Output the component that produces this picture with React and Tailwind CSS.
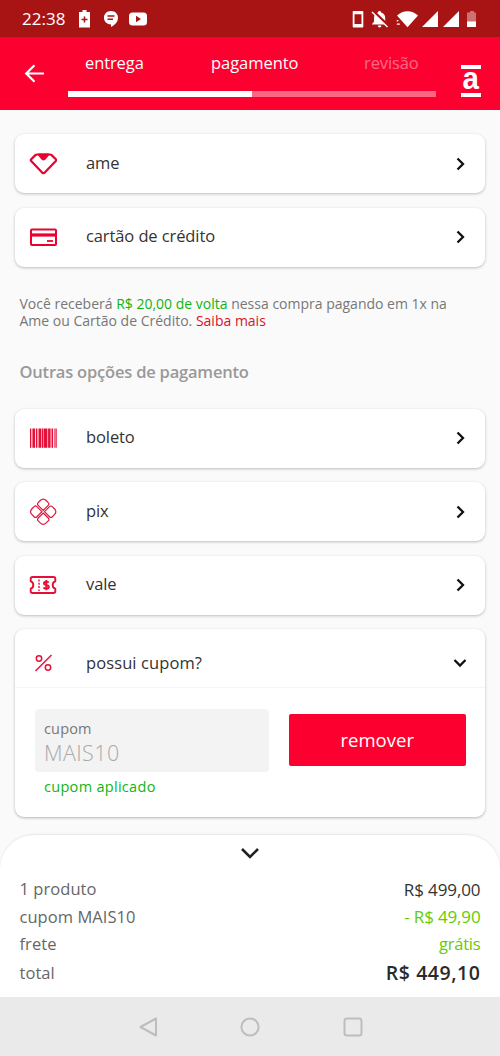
import React from "react";

const App = () => {

  return (

    <div className="w-[500px] h-[1056px] flex flex-col overflow-hidden bg-[#fafafa] font-['Open_Sans','Noto_Sans',sans-serif] text-[#333333]">

      <StatusBar />

      <Header />

      {/* CONTENT */}

      <main className="flex-1 px-[15px] pt-[24px]">

        <div className="flex flex-col gap-[14.5px]">

          <Option
            icon={<AmeIcon />}
            label="ame"
          />

          <Option
            icon={<CardIcon />}
            label="cartão de crédito"
          />

        </div>

        <p className="mt-[28px] pl-[4.5px] text-[14px] leading-[17.5px] text-[#777777] whitespace-nowrap">

          <span className="block">
            Você receberá <span className="text-[#10b510]">R$ 20,00 de volta</span> nessa compra pagando em 1x na
          </span>

          <span className="block">
            Ame ou Cartão de Crédito. <span className="text-[#d4142c]">Saiba mais</span>
          </span>

        </p>

        <h2 className="mt-[30px] pl-[4.5px] text-[16.5px] leading-[24px] font-semibold tracking-[-0.2px] text-[#999999]">
          Outras opções de pagamento
        </h2>

        <div className="mt-[25px] flex flex-col gap-[14.5px]">

          <Option
            icon={<BarcodeIcon />}
            label="boleto"
          />

          <Option
            icon={<PixIcon />}
            label="pix"
          />

          <Option
            icon={<TicketIcon />}
            label="vale"
          />

          <Coupon />

        </div>

      </main>

      <Summary />

      <NavBar />

    </div>
  );
};

const StatusBar = () => (

  <div className="h-[37px] shrink-0 bg-[#a81414] text-white flex items-center justify-between pl-[22px] pr-[22px]">

    <div className="flex items-center">

      <span className="w-[57px] text-[17px] leading-[20px]">
        22:38
      </span>

      {/* battery, message, video */}

      <svg width="70" height="18" viewBox="0 0 70 18" fill="currentColor">
        <path d="M3.5 2V0h4v2H11v15.5H0V2z" />
        <path d="M5.5 6.5v6M2.5 9.5h6" stroke="#a81414" strokeWidth="1.6" />
        <path d="M32 1c4.200 0 7 2.900 7 6.700 0 4.300-3.100 7.300-7 9.300v-2.600c-4.100 0-7-2.800-7-6.700C25 3.900 27.800 1 32 1z" />
        <path d="M28.500 6h7M28.500 9.300h5.500" stroke="#a81414" strokeWidth="1.400" />
        <rect x="50" y="2.500" width="18" height="13" rx="3.500" />
        <path d="M57 5.800v6.400l5-3.200z" fill="#a81414" />
      </svg>

    </div>

    {/* phone, muted bell, wifi, signals, battery level */}

    <svg width="126" height="18" viewBox="0 0 126 18" fill="currentColor">
      <path fillRule="evenodd" d="M1.500 1h9a.8.8 0 0 1 .8.8v14.900a.8.8 0 0 1-.8.8h-9a.8.8 0 0 1-.8-.8V1.800a.8.8 0 0 1 .8-.8zM2.500 4.300v9.800h7V4.300z" />
      <path d="M27.500 1c1 0 1.600.6 1.600 1.500 2.700.7 4.100 2.800 4.100 5.400v3.800l2 2.200v.6H20v-.6l2-2.200V7.900c0-2.600 1.400-4.700 4-5.400 0-.9.600-1.500 1.500-1.500zM25.800 15.500h3.600c0 1.200-.8 1.900-1.800 1.900s-1.800-.7-1.800-1.900z" />
      <path d="M20.500 0.700L36.500 16" stroke="#a81414" strokeWidth="3" />
      <path d="M20 2L35.500 17" stroke="currentColor" strokeWidth="1.400" />
      <path d="M45 5.500C51-.2 60-.2 66 5.500L55.500 17.300z" />
      <path d="M43.500 9.300h4.500v6h-4.500z" fill="#a81414" />
      <path d="M44.800 9.800l2.300 1-2.300 1zM44.800 13.500h3v1.300h-3z" />
      <path d="M86 1v16H70zM107 1v16H91z" />
      <path d="M118 2.500V1h4v1.500h2V12h-9V2.500z" fillOpacity="0.4" />
      <path d="M115 11.500h9v5.500h-9z" />
    </svg>

  </div>
);

const Header = () => (

  <header className="h-[73px] shrink-0 bg-[#fc0030] text-white flex">

    <div className="w-[68px] pt-[27px] pl-[24px]">

      <svg width="21" height="19" viewBox="0 0 21 19" fill="none" stroke="currentColor" strokeWidth="2.200">
        <path d="M20 9.500H2.500M10.500 1.200L2.200 9.500l8.300 8.300" />
      </svg>

    </div>

    <div className="w-[368px]">

      <div className="h-[54px] pt-[14px] grid grid-cols-[143px_153px_72px] text-[16.5px] leading-[24px]">

        <span className="pl-[17px] tracking-[-0.1px]">entrega</span>

        <span className="tracking-[-0.05px]">pagamento</span>

        <span className="tracking-[-0.1px] opacity-40">revisão</span>

      </div>

      <div className="h-[5.500px] bg-white/40">
        <div className="h-full w-1/2 bg-white" />
      </div>

    </div>

    {/* LOGO */}

    <div className="ml-[25px] mt-[28px] w-[20px] h-[32px] border-y-[4px] border-white flex items-center justify-center">
      <span className="font-['Liberation_Sans',sans-serif] font-bold text-[31px] leading-[24px] -mt-[5px] scale-x-95">a</span>
    </div>

  </header>
);

const Option = ({ icon, label }) => (

  <button className="w-full h-[59px] shrink-0 rounded-[9px] bg-white shadow-[0_1px_3px_rgba(0,0,0,0.25)] flex items-center text-left">

    <span className="w-[71px] pl-[14px]">{icon}</span>

    <span className="flex-1 pb-[2px] text-[16.5px] leading-[24px] tracking-[-0.1px]">{label}</span>

    <svg className="mr-[19px]" width="10" height="14" viewBox="0 0 10 14" fill="none" stroke="#111111" strokeWidth="2.300">
      <path d="M1.500 1.500L7 7 1.500 12.500" />
    </svg>

  </button>
);

const Coupon = () => (

  <section className="h-[187.500px] rounded-[9px] bg-white shadow-[0_1px_3px_rgba(0,0,0,0.28)]">

    <div className="h-[59px] pt-[9px] border-b border-[#f4f4f4] flex items-center">

      <span className="w-[71px] pl-[14px]"><PercentIcon /></span>

      <span className="flex-1 text-[16.5px] leading-[24px] tracking-[0.1px]">possui cupom?</span>

      <svg className="mr-[18px]" width="14" height="10" viewBox="0 0 14 10" fill="none" stroke="#111111" strokeWidth="2.300">
        <path d="M1.500 2L7 7.500 12.500 2" />
      </svg>

    </div>

    <div className="pl-[19.500px] pt-[21px] flex">

      <div className="w-[234.500px]">

        <div className="h-[63px] rounded-[4px] bg-[#f3f3f3] pl-[9.500px] pt-[9.500px]">

          <p className="text-[14.500px] leading-[20px] tracking-[0.15px] text-[#777777]">cupom</p>

          <p className="text-[21.500px] leading-[28px] tracking-[0.4px] font-light text-[#aaaaaa]">MAIS10</p>

        </div>

        <p className="mt-[5px] pl-[9.500px] text-[14.500px] leading-[20px] tracking-[0.3px] text-[#10b510]">
          cupom aplicado
        </p>

      </div>

      <button className="ml-[20px] mt-[4.500px] w-[176.500px] h-[52.500px] pt-px rounded-[2px] bg-[#fc0030] text-white text-[18.500px] leading-[24px]">
        remover
      </button>

    </div>

  </section>
);

const Summary = () => (

  <section className="h-[162px] shrink-0 rounded-t-[34px] bg-white shadow-[0_-1px_2px_rgba(0,0,0,0.08)] px-[19.500px] text-[16.5px] text-[#666666]">

    <div className="h-[41px] pt-[12px] flex justify-center">

      <svg width="20" height="12" viewBox="0 0 20 12" fill="none" stroke="#222222" strokeWidth="2.600">
        <path d="M2 2l8 8 8-8" />
      </svg>

    </div>

    <Row label="1 produto" value="R$ 499,00" valueClass="text-[#333333] text-[17px] tracking-[-0.1px]" />

    <Row label="cupom MAIS10" value="- R$ 49,90" valueClass="text-[#66cc00] text-[17px] tracking-[-0.15px]" />

    <Row label="frete" value="grátis" valueClass="text-[#66cc00] tracking-[-0.2px]" />

    <div className="mt-[1.500px]">
      <Row label="total" value="R$ 449,10" valueClass="text-[#2a2a2a] font-semibold text-[19.500px] tracking-[0.550px]" />
    </div>

  </section>
);

const Row = ({ label, value, valueClass }) => (

  <div className="h-[27.300px] flex items-center justify-between">
    <span className="tracking-[0.05px]">{label}</span>
    <span className={valueClass}>{value}</span>
  </div>
);

const NavBar = () => (

  <nav className="h-[59px] shrink-0 bg-[#eaeaea] flex items-center justify-center gap-[82.500px]">

    <svg width="20" height="20" viewBox="0 0 20 20" fill="none" stroke="#bdbdbd" strokeWidth="2" strokeLinejoin="round">
      <path d="M18 1.500v17L2.500 10z" />
    </svg>

    <svg width="20" height="20" viewBox="0 0 20 20" fill="none" stroke="#bdbdbd" strokeWidth="2">
      <circle cx="10" cy="10" r="8.600" />
    </svg>

    <svg width="20" height="20" viewBox="0 0 20 20" fill="none" stroke="#bdbdbd" strokeWidth="2">
      <rect x="1.500" y="1.500" width="17" height="17" rx="2.500" />
    </svg>

  </nav>
);

/* ICONS */

const AmeIcon = () => (
  <svg width="28" height="28" viewBox="0 0 28 28" fill="none" stroke="#ec0030" strokeWidth="2.200" strokeLinejoin="round">
    <path d="M8 4.500h13q1 0 1.600.6l4.200 4.200q.8.900 0 1.800L15.500 22.700q-1.100 1-2.200 0L2.200 11.100q-.8-.9 0-1.800l4.200-4.200Q7 4.500 8 4.500z" />
    <path d="M9.800 4.500h9.400l-3.500 4.200q-1.200 1.100-2.400 0z" fill="#ec0030" />
  </svg>
);

const CardIcon = () => (
  <svg width="28" height="28" viewBox="0 0 28 28" fill="none" stroke="#ec0030" strokeWidth="2">
    <rect x="2" y="6.500" width="25" height="15.500" rx="1" />
    <path d="M2 12h25" strokeWidth="3.200" />
    <path d="M18 18h6" strokeWidth="1.800" />
  </svg>
);

const BarcodeIcon = () => (
  <svg width="28" height="28" viewBox="0 0 28 28" fill="#e60f38">
    <path d="M1 4.500h1.300v19.200H1zM3.400 4.500h2.600v19.200H3.400zM6.900 4.500h1.500v19.200H6.900zM9.500 4.500h2.500v19.200H9.500zM12.600 4.500h1.500v19.200h-1.500zM14.600 4.500h3.800v19.200h-3.800zM19.100 4.500h2.500v19.200h-2.500zM22.500 4.500h1.500v19.200h-1.500zM24.900 4.500h.7v19.200h-.7zM26.400 4.500h1.300v19.200h-1.300z" />
  </svg>
);

const PixIcon = () => (
  <svg width="28" height="28" viewBox="0 0 28 28" fill="none" stroke="#e60f38" strokeWidth="1.150">
    <g transform="translate(14.2 13.700) rotate(45)">
      <path d="M.9.900H8Q10 .9 10 2.900V5.800Q10 10 5.800 10H2.900Q.9 10 .9 8z" />
      <path d="M-.9.900H-8Q-10 .9-10 2.900V5.800Q-10 10-5.800 10H-2.900Q-.9 10-.9 8z" />
      <path d="M.9-.9H8Q10-.9 10-2.900V-5.800Q10-10 5.800-10H2.900Q.9-10 .9-8z" />
      <path d="M-.9-.9H-8Q-10-.9-10-2.900V-5.800Q-10-10-5.800-10H-2.900Q-.9-10-.9-8z" />
    </g>
  </svg>
);

const TicketIcon = () => (
  <svg width="28" height="28" viewBox="0 0 28 28" fill="none" stroke="#e60f38" strokeWidth="1.900" strokeLinejoin="round">
    <path d="M3.500 6H24.500Q26.300 6 26.300 7.800V10.300Q23.700 11 23.700 14T26.300 17.700V20.200Q26.300 22 24.500 22H3.500Q1.700 22 1.700 20.200V17.700Q4.300 17 4.300 14T1.700 10.300V7.800Q1.700 6 3.500 6z" />
    <path d="M10 8.500v11.500" strokeWidth="1.400" strokeDasharray="2 1.300" />
    <path d="M19.700 11.600Q19 10.600 17.300 10.600 14.900 10.600 14.900 12.300 14.900 13.700 17.300 14 19.800 14.400 19.800 16 19.800 17.700 17.300 17.700 15.200 17.700 14.500 16.500M17.300 9v10.300" strokeWidth="1.900" />
  </svg>
);

const PercentIcon = () => (
  <svg width="28" height="28" viewBox="0 0 28 28" fill="none" stroke="#e60f38" strokeWidth="1.500">
    <path d="M6.500 22L22.500 6" />
    <circle cx="10" cy="9.500" r="2.700" />
    <circle cx="19" cy="18.500" r="2.700" />
  </svg>
);

export default App;
